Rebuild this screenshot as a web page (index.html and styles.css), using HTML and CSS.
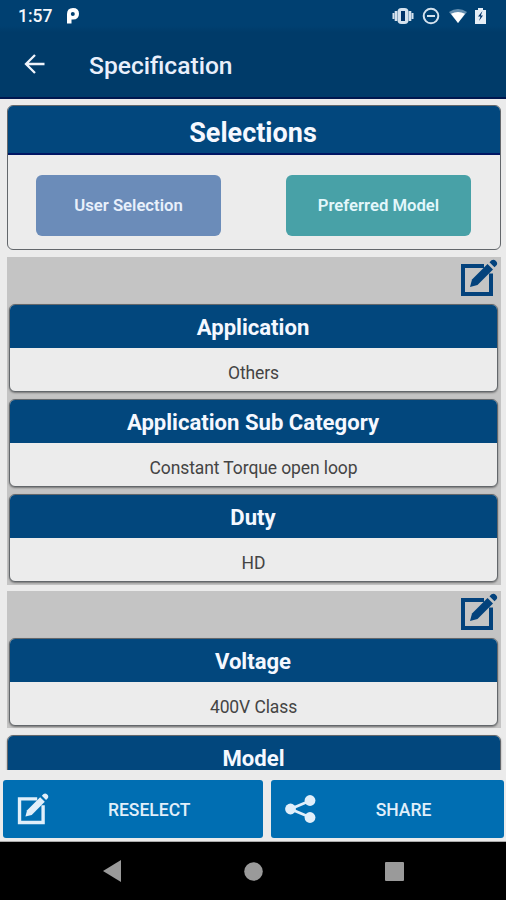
FILE: index.html
```html
<!DOCTYPE html>
<html lang="en">
<head>
<meta charset="utf-8">
<title>Specification</title>
<link rel="stylesheet" href="styles.css">
</head>
<body>
<svg class="defs" width="0" height="0">
  <symbol id="edit" viewBox="0 0 38 38">
    <path d="M24 7H3v28h28V14.500" fill="none" stroke="currentColor" stroke-width="4"/>
    <path d="M10 28l2-7.500L27.500 5l5.500 5.500L17.500 26z" fill="currentColor"/>
    <path d="M29.500 3.300l2-2q2.200-1.600 4.400.6t.6 4.400l-2 2z" fill="currentColor"/>
  </symbol>
</svg>
<div class="phone">
  <header class="top">
    <div class="status">
      <span class="time">1:57</span>
      <svg class="pie" width="14" height="16" viewBox="0 0 14 16"><path fill="#fff" fill-rule="evenodd" d="M1 15.500V6Q1 0 7 0t6 5.800-6 5.800H5.500v3.900zM6.800 4A2 2 0 1 0 6.800 8 2 2 0 1 0 6.800 4z"/></svg>
      <span class="sysicons">
        <svg width="22" height="18" viewBox="0 0 22 18"><path d="M1.500 6v6M20.500 6v6" stroke="#d5e2ee" stroke-width="2"/><path d="M4 4v10M18 4v10" stroke="#d5e2ee" stroke-width="2.600"/><rect x="5.500" y="1" width="11" height="16" rx="4" fill="#d5e2ee"/><rect x="9" y="4" width="4" height="10" fill="#003369"/></svg>
        <svg width="18" height="18" viewBox="0 0 18 18"><circle cx="9" cy="9" r="7.300" fill="none" stroke="#d5e2ee" stroke-width="2"/><path d="M5 9h8" stroke="#d5e2ee" stroke-width="2"/></svg>
        <svg width="18" height="16" viewBox="0 0 18 16"><path d="M0 4q9-6 18 0L9 15z" fill="#648eaf"/><path d="M2 5.800q7-3.500 14 0L9 15z" fill="#fff"/></svg>
        <svg width="11" height="16" viewBox="0 0 11 16"><path d="M0 2h3V0h5v2h3v14H0z" fill="#e6eef6"/><path d="M7.500 3L3 8.500h2.500L4 13l4-5.500H5.800z" fill="#003369"/></svg>
      </span>
    </div>
    <div class="appbar">
      <svg width="22" height="20" viewBox="0 0 22 20"><path d="M20.500 10H2M11 1L2 10l9 9" fill="none" stroke="#eef3fb" stroke-width="2.300"/></svg>
      <h1>Specification</h1>
    </div>
  </header>
  <main>
    <section class="card selections">
      <h2>Selections</h2>
      <div class="choices">
        <button class="user">User Selection</button>
        <button class="preferred">Preferred Model</button>
      </div>
    </section>
    <section class="group">
      <div class="tools"><svg width="38" height="38"><use href="#edit"/></svg></div>
      <article class="card"><h3>Application</h3><p>Others</p></article>
      <article class="card"><h3>Application Sub Category</h3><p>Constant Torque open loop</p></article>
      <article class="card"><h3>Duty</h3><p>HD</p></article>
    </section>
    <section class="group last">
      <div class="tools"><svg width="38" height="38"><use href="#edit"/></svg></div>
      <article class="card"><h3>Voltage</h3><p>400V Class</p></article>
    </section>
    <section class="card model"><h3>Model</h3></section>
  </main>
  <footer class="actions">
    <button class="reselect"><svg width="32" height="32"><use href="#edit"/></svg><span>RESELECT</span></button>
    <button class="share"><svg width="31" height="28" viewBox="0 0 31 28"><path d="M25 5.800L5.500 14 25 22.200" fill="none" stroke="currentColor" stroke-width="2.800"/><g fill="currentColor"><circle cx="25" cy="5.500" r="5.400"/><circle cx="5.500" cy="14" r="5.400"/><circle cx="25" cy="22.500" r="5.400"/></g></svg><span>SHARE</span></button>
  </footer>
  <nav>
    <svg width="18" height="22" viewBox="0 0 18 22"><path d="M18 0v22L0 11z" fill="#9a9a9a"/></svg>
    <svg width="19" height="19" viewBox="0 0 19 19"><circle cx="9.500" cy="9.500" r="9.300" fill="#9a9a9a"/></svg>
    <svg width="19" height="19" viewBox="0 0 19 19"><rect width="19" height="19" rx="1" fill="#9a9a9a"/></svg>
  </nav>
</div>
</body>
</html>
```
FILE: styles.css
```css
* { box-sizing: border-box; }
body { margin: 0; font-family: Roboto, "Liberation Sans", sans-serif; }
h1, h2, h3, p { margin: 0; }
button { border: 0; padding: 0; font: inherit; }
.defs { display: block; position: absolute; }
.phone { width: 506px; height: 900px; display: flex; flex-direction: column; background: #ebebeb; overflow: hidden; }
.top { height: 99px; flex: none; background: #003b69; border-bottom: 2px solid #00174f; }
.status { height: 32px; padding: 0 20px 0 18px; display: flex; align-items: center; background: linear-gradient(#004071 26px, #003b69); }
.time { width: 48px; font-size: 17.5px; font-weight: 500; color: #f3f6fb; }
.sysicons { margin-left: auto; display: flex; align-items: center; gap: 8.5px; }
.appbar { height: 65px; display: flex; align-items: center; padding-left: 23.5px; gap: 43.5px; }
.appbar svg { position: relative; top: -1px; }
h1 { font-size: 24.6px; line-height: 30px; padding-top: 2px; font-weight: 500; color: #e9effb; }
main { height: 671px; flex: none; overflow: hidden; padding: 6px 5px 0 7px; }
.card { border: 1.5px solid #63676b; border-radius: 6px; background: #ececec; overflow: hidden; text-align: center; box-shadow: 0 1px 2px #0006; }
.selections { height: 145px; box-shadow: none; }
h2, h3 { background: #02477d; color: #f5f8ff; font-weight: 700; }
h2 { height: 49px; line-height: 54px; font-size: 27px; border-bottom: 2px solid #001663; padding-right: 2px; }
.choices { display: flex; justify-content: space-between; padding: 20px 29px 0 28px; }
.choices button { width: 185px; height: 61px; padding-bottom: 1px; border-radius: 6px; font-size: 16.7px; font-weight: 600; }
.user { background: #6b8cb9; color: #e8f0fb; }
.preferred { background: #48a1a7; color: #e3f7fb; }
.group { margin-top: 7px; height: 328px; background: #c4c4c4; padding: 0 3px 0 2px; display: flex; flex-direction: column; gap: 7px; }
.tools { height: 40px; flex: none; display: flex; justify-content: flex-end; padding-top: 2px; color: #03427c; }
.group .card { height: 88px; flex: none; }
h3 { height: 42.5px; line-height: 45px; font-size: 22.1px; padding-right: 1px; }
.card p { line-height: 51px; font-size: 17.5px; letter-spacing: -0.1px; color: #444; }
.group.last { margin-top: 6px; height: 137px; }
.model { margin-top: 7px; height: 90px; }
.actions { height: 72px; flex: none; display: flex; gap: 8px; padding: 10px 2px 3px 3px; border-bottom: 1px solid #aaa; }
.actions button { display: flex; align-items: center; background: #006eb2; color: #e1effa; font-size: 17.5px; font-weight: 500; border-radius: 3px; }
.actions span { flex: 1; text-align: center; padding: 2px 13px 0 0; }
.reselect { width: 260px; }
.share { width: 233px; }
.reselect svg { margin-left: 13.5px; }
.share svg { margin-left: 14px; }
nav { height: 58px; flex: none; background: #000; display: flex; justify-content: space-between; align-items: center; padding: 0 102px 0 103px; }
```
